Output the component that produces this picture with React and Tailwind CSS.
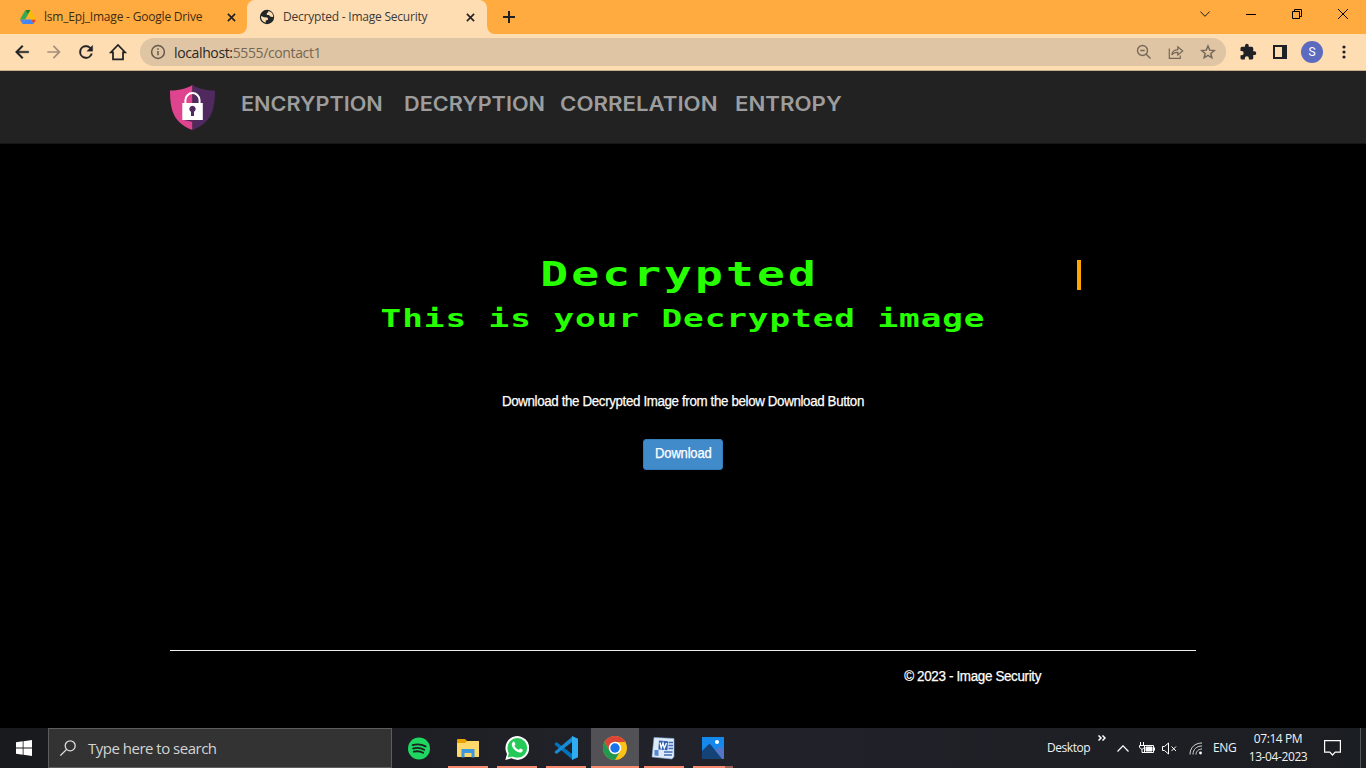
import React from 'react';

const uiFont = "font-['Open_Sans','Noto_Sans',sans-serif]";
const bodyFont = "font-['Liberation_Sans',Arial,sans-serif]";

function Close({ className }) {
  return (
    <svg viewBox="0 0 10 10" className={'h-[9px] w-[9px] ' + className} fill="none" stroke="#222" strokeWidth="1.8">
      <path d="M1 1l8 8M9 1L1 9" />
    </svg>
  );
}

function DriveLogo() {
  return (
    <svg viewBox="0 0 87.3 78" className="h-[14px] w-[16px]">
      <path fill="#4285f4" d="M6.6 66.85l3.85 6.65c.8 1.4 1.95 2.5 3.3 3.3L27.5 53H0c0 1.55.4 3.1 1.2 4.5z" />
      <path fill="#34a853" d="M43.65 25L29.9 1.2c-1.35.8-2.5 1.9-3.3 3.3L1.2 48.5A9 9 0 0 0 0 53h27.5z" />
      <path fill="#ea4335" d="M73.55 76.8c1.35-.8 2.5-1.9 3.3-3.3l1.6-2.75L86.1 57.5c.8-1.4 1.2-2.95 1.2-4.5H59.8l5.85 11.5z" />
      <path fill="#188038" d="M43.65 25L57.4 1.2C56.05.4 54.5 0 52.9 0H34.4c-1.6 0-3.15.45-4.5 1.2z" />
      <path fill="#4285f4" d="M59.8 53H27.5L13.75 76.8c1.35.8 2.9 1.2 4.5 1.2h50.8c1.6 0 3.15-.45 4.5-1.2z" />
      <path fill="#fbbc04" d="M73.4 26.5L60.7 4.5c-.8-1.4-1.95-2.5-3.3-3.3L43.65 25 59.8 53h27.45c0-1.55-.4-3.1-1.2-4.5z" />
    </svg>
  );
}

function Globe() {
  return (
    <svg viewBox="0 0 16 16" className="h-[16px] w-[16px]">
      <circle cx="8" cy="8" r="7.2" fill="#222528" />
      <path fill="#ffddb3" d="M9.1 1.9l.3 1.2-1.6 1.1v1.7l2.1.2 1.7 1.6 2.6.2A6 6 0 0 0 9.1 1.9zM2 7.1l3.2 1.1 3.1.3.9 1.4-1 1.3H6.8l-.2 2.5A6 6 0 0 1 2 7.1z" />
    </svg>
  );
}

function TabStrip() {
  return (
    <div className="flex h-[34px] w-full bg-[#ffab40]">
      <div className="flex w-[247px] items-center pl-5">
        <DriveLogo />
        <span className="ml-2 w-[183px] whitespace-nowrap text-[12px] tracking-[-0.2px] text-[#3d2b14]">lsm_Epj_Image - Google Drive</span>
        <Close className="shrink-0" />
      </div>
      <div className="relative flex w-[240px] items-center rounded-t-[8px] bg-[#ffddb3] pl-3">
        <svg viewBox="0 0 8 8" className="absolute -left-2 bottom-0 h-2 w-2" fill="#ffddb3"><path d="M8 0v8H0A8 8 0 0 0 8 0z" /></svg>
        <svg viewBox="0 0 8 8" className="absolute -right-2 bottom-0 h-2 w-2" fill="#ffddb3"><path d="M0 0v8h8A8 8 0 0 1 0 0z" /></svg>
        <Globe />
        <span className="ml-2 w-[183px] whitespace-nowrap text-[12px] tracking-[-0.22px] text-[#3b3a38]">Decrypted - Image Security</span>
        <Close className="shrink-0" />
      </div>
      <svg viewBox="0 0 12 12" className="ml-4 mt-[11px] h-3 w-3" stroke="#202124" strokeWidth="2"><path d="M6 0v12M0 6h12" /></svg>
      <div className="ml-auto flex h-7 items-center">
        <svg viewBox="0 0 10 6" className="mr-[36px] h-[6px] w-[10px]" fill="none" stroke="#1c1c1c"><path d="M.3.5L5 5.3 9.7.5" /></svg>
        <svg viewBox="0 0 10 10" className="mr-[36px] h-[10px] w-[10px]" stroke="#000"><path d="M0 5.5h10" /></svg>
        <svg viewBox="0 0 10 10" className="mr-[36px] h-[10px] w-[10px]" fill="none" stroke="#000"><path d="M.5 2.5h7v7h-7zM2.5 2.5v-2h7v7h-2" /></svg>
        <svg viewBox="0 0 10 10" className="mr-[18px] h-[10px] w-[10px]" fill="none" stroke="#000"><path d="M0 0l10 10M10 0L0 10" /></svg>
      </div>
    </div>
  );
}

function Toolbar() {
  return (
    <div className="flex h-[37px] w-full items-center border-b border-[#c9ae8d] bg-[#ffddb3]">
      <svg viewBox="0 0 24 24" className="ml-3 h-5 w-5" fill="#202124"><path d="M20 11H7.83l5.59-5.59L12 4l-8 8 8 8 1.41-1.41L7.83 13H20z" stroke="#202124" strokeWidth=".5" /></svg>
      <svg viewBox="0 0 24 24" className="ml-3 h-5 w-5" fill="#a38f79"><path d="M12 4l-1.41 1.41L16.17 11H4v2h12.17l-5.58 5.59L12 20l8-8z" /></svg>
      <svg viewBox="0 0 24 24" className="ml-3 h-5 w-5" fill="#202124"><path d="M17.65 6.35A7.96 7.96 0 0 0 12 4a8 8 0 1 0 7.73 10h-2.08A6 6 0 1 1 12 6c1.66 0 3.14.69 4.22 1.78L13 11h7V4z" stroke="#202124" strokeWidth=".4" /></svg>
      <svg viewBox="0 0 24 24" className="ml-3 h-5 w-5" fill="none" stroke="#202124" strokeWidth="2.1"><path d="M3.5 12.3L12 3.600l8.500 8.700H18V20.800H6v-8.500z" /></svg>
      <div className="ml-3 flex h-7 w-[1086px] items-center rounded-full bg-[#dfc5a3]">
        <svg viewBox="0 0 16 16" className="ml-[10px] h-4 w-4" fill="none" stroke="#65594b" strokeWidth="1.5"><circle cx="8" cy="8" r="6.4" /><path d="M8 7v4.2M8 4.2v1.5" /></svg>
        <span className="ml-2 whitespace-nowrap text-[14px] tracking-[-0.37px] text-[#756755]"><span className="text-[#292724]">localhost:</span>5555/contact1</span>
        <svg viewBox="0 0 16 16" className="ml-auto h-4 w-4" fill="none" stroke="#75685a" strokeWidth="1.4"><circle cx="6.500" cy="6.500" r="5" /><path d="M10.200 10.200l4.300 4.300M4.300 6.500h4.400" /></svg>
        <svg viewBox="0 0 16 16" className="ml-4 h-4 w-4" fill="none" stroke="#75685a" strokeWidth="1.2"><path d="M1.300 4.500v9.800h11v-2.800M3.800 11c.3-3.200 2.400-5.200 6-5.400V2.700L14.700 7l-4.900 4V8.300C7 8.200 5 9 3.800 11z" /></svg>
        <svg viewBox="0 0 24 24" className="ml-[15px] mr-[9px] h-[18px] w-[18px]" fill="none" stroke="#75685a" strokeWidth="2"><path d="M12 4l2.300 5.500 6 .5-4.500 3.900 1.300 5.800-5.100-3.100-5.100 3.100 1.300-5.800L3.700 10l6-.5z" /></svg>
      </div>
      <svg viewBox="0 0 24 24" className="ml-[13px] h-[18px] w-[18px]" fill="#202124"><path d="M20.5 11H19V7a2 2 0 0 0-2-2h-4V3.500a2.500 2.500 0 0 0-5 0V5H4a2 2 0 0 0-2 2v3.800h1.500a2.700 2.700 0 0 1 0 5.400H2V20a2 2 0 0 0 2 2h3.800v-1.500a2.700 2.700 0 0 1 5.400 0V22H17a2 2 0 0 0 2-2v-4h1.500a2.500 2.500 0 0 0 0-5z" /></svg>
      <svg viewBox="0 0 14 14" className="ml-[16px] h-[14px] w-[14px]"><path fill="none" stroke="#202124" strokeWidth="2" d="M1 1h12v12H1z" /><path fill="#202124" d="M9 0h5v14H9z" /></svg>
      <div className="ml-[14px] flex h-[22px] w-[22px] items-center justify-center rounded-full bg-[#5c6bc0] font-['Roboto',sans-serif] text-[12px] text-white">S</div>
      <svg viewBox="0 0 4 14" className="ml-[19px] h-[14px] w-1" fill="#202124"><circle cx="2" cy="2" r="1.6" /><circle cx="2" cy="7" r="1.6" /><circle cx="2" cy="12" r="1.6" /></svg>
    </div>
  );
}

function Shield() {
  return (
    <svg viewBox="0 0 45 45" className="h-[45px] w-[45px] shrink-0">
      <path fill="#df458f" d="M22.500 0C16 4 8 5.500 0 5.500 0 26 4 38 22.500 45z" />
      <path fill="#50295f" d="M22.500 0C29 4 37 5.500 45 5.500 45 26 41 38 22.500 45z" />
      <path fill="#50295f" d="M14 35h8.500v2z" />
      <path fill="none" stroke="#fff" strokeWidth="2" d="M15.400 19v-3.800a7.100 7.100 0 0 1 14.200 0V19" />
      <path fill="#fff" d="M12.300 18h20.500v17H12.300z" />
      <path fill="#50295f" d="M22.500 20.800a3.300 3.300 0 0 0-1.500 6.200V31h3v-4a3.300 3.300 0 0 0-1.500-6.200z" />
    </svg>
  );
}

function NavItem({ children, className, fit }) {
  return (
    <a className={'whitespace-nowrap ' + className}>
      <span className={'inline-block origin-left ' + fit}>{children}</span>
    </a>
  );
}

function Navbar() {
  return (
    <nav className="flex h-[73px] w-full border-b border-[#151515] bg-[#222] pl-[170px] pt-[14px]">
      <Shield />
      <div className="ml-[26px] flex pt-[5px] font-['Inter',sans-serif] text-[19.500px] font-semibold leading-7 text-[#9d9d9d]">
        <NavItem className="w-[163px]" fit="scale-x-[1.11]">ENCRYPTION</NavItem>
        <NavItem className="w-[156px]" fit="scale-x-[1.11]">DECRYPTION</NavItem>
        <NavItem className="w-[175px]" fit="scale-x-[1.14]">CORRELATION</NavItem>
        <NavItem className="w-[110px]" fit="scale-x-[1.14]">ENTROPY</NavItem>
      </div>
    </nav>
  );
}

function Content() {
  return (
    <main className={'flex h-[584px] w-full flex-col items-center bg-black text-white ' + bodyFont}>
      <div className="mt-[116px] flex h-[30px] w-[796px] items-center justify-center border-r-4 border-[#ffa500] font-['DejaVu_Sans_Mono',monospace] text-[33px] font-bold leading-[30px] text-[#26ff00]">
        <span className="-ml-[2px] inline-block origin-center scale-x-[1.4] whitespace-nowrap tracking-[2.27px]">Decrypted</span>
      </div>
      <h2 className="mt-[14px] flex h-[30px] items-center font-['DejaVu_Sans_Mono',monospace] text-[24.500px] font-bold leading-[30px] text-[#26ff00]">
        <span className="inline-block origin-center scale-x-[1.4] whitespace-nowrap tracking-[0.68px]">This is your Decrypted image</span>
      </h2>
      <p className="mt-[57px] h-5 origin-center scale-x-[0.953] whitespace-nowrap text-[14px] leading-5 tracking-[-0.38px] [-webkit-text-stroke:0.25px_#fff]">Download the Decrypted Image from the below Download Button</p>
      <button className="mt-[28px] flex h-[31px] w-[80px] items-center justify-center rounded-[3px] border border-[#357ebd] bg-[#428bca] pb-[2px] text-[14px] tracking-[-0.2px] [-webkit-text-stroke:0.25px_#fff]">
        <span className="inline-block scale-x-[0.93]">Download</span>
      </button>
      <footer className="mt-[180px] flex w-[1026px] justify-end border-t border-[#eee] pr-[155px] pt-[15px]">
        <p className="origin-right scale-x-[0.957] whitespace-nowrap text-[14px] leading-5 tracking-[-0.35px] [-webkit-text-stroke:0.25px_#fff]">© 2023 - Image Security</p>
      </footer>
    </main>
  );
}

function AppSlot({ children, active, className = '' }) {
  return (
    <div className={'flex h-10 items-center justify-center ' + (active ? 'w-12 bg-[#515156] ' : 'w-10 ') + 'border-b-2 border-[#f88a70] pt-[2px] ' + className}>{children}</div>
  );
}

function TaskApps() {
  return (
    <div className="flex h-10">
      <div className="flex w-[56px] items-center justify-center pr-[2px]">
        <svg viewBox="0 0 24 24" className="h-[23px] w-[22px]"><circle cx="12" cy="12" r="12" fill="#1ed760" /><path fill="none" stroke="#1f2024" strokeWidth="2" strokeLinecap="round" d="M5 8.300c5-1.500 10-.9 14.200 1.400M5.700 12c4-1.200 8.200-.8 12 1.300M6.300 15.500c3.500-.9 7-.5 10.200 1.200" /></svg>
      </div>
      <AppSlot>
        <svg viewBox="0 0 22 19" className="h-[19px] w-[22px]"><path fill="#e8a300" d="M0 1q0-1 1-1h7l2 2H22v5H0z" /><path fill="#ffd86b" d="M0 4h8l2-2h12v15.500q0 .5-1 .5H1q-1 0-1-1z" /><path fill="#3b98e0" d="M4.500 10h13v8.500h-3V14h-7v4.500h-3z" /></svg>
      </AppSlot>
      <AppSlot className="ml-[9px]">
        <svg viewBox="0 0 24 24" className="h-6 w-6"><path fill="#fff" d="M.3 24l1.700-6.100A11.900 11.900 0 1 1 6.400 22.300z" /><circle cx="12.300" cy="11.900" r="9.900" fill="#25c957" /><path fill="#25c957" d="M2.800 21.400l1.200-5 3.900 4z" /><path fill="#fff" d="M8 6c.6-.6 1.300-.5 1.600.2l.8 1.900c.2.600-.9 1.500-.9 1.800 1 1.900 2.300 3.100 4.300 3.800.4.100 1.200-1.300 1.600-1.200l2.100 1c.8.400-.1 2.300-.8 2.700-3.800 2.100-11-4.600-9.800-8.600.2-.7.600-1.200 1.100-1.600z" /></svg>
      </AppSlot>
      <AppSlot className="ml-[9px]">
        <svg viewBox="0 0 24 24" className="h-6 w-6"><path fill="#0073bd" d="M.5 7.700L2.500 6 19 18.700V24L1 9z" /><path fill="#198bd3" d="M.5 16.300l2 1.700L19 5.300V0L.8 15.500z" /><path fill="#2eacf4" d="M18 0l6 2.700v18.600L18 24z" /></svg>
      </AppSlot>
      <AppSlot active className="ml-[5px]">
        <svg viewBox="0 0 24 24" className="h-6 w-6"><circle cx="12" cy="12" r="12" fill="#fbc116" /><path fill="#dd4436" d="M1.600 6A12 12 0 0 1 22.400 6H12l-5.200 9z" /><path fill="#219750" d="M1.600 6L6.800 15 12 18l5.200-3L12 24A12 12 0 0 1 1.600 6z" /><circle cx="12" cy="12" r="6.200" fill="#fff" /><circle cx="12" cy="12" r="4.700" fill="#1a73e8" /></svg>
      </AppSlot>
      <AppSlot className="ml-[5px] pr-[2px]">
        <svg viewBox="0 0 24 23" className="h-[23px] w-6"><path fill="#dceafa" stroke="#8aabdc" strokeWidth=".6" d="M3 .500L23 1.500v18L21 22 1 20z" /><path stroke="#416cb8" strokeWidth="1.300" d="M17.500 5.500h4.500M17.500 8.500h4.500M17.500 11.500h4.500M13 15h8.500M13 18h8" /><path fill="#5b86cc" d="M3.500 13h4v6l-4-.5z" /><path fill="#2f5fae" d="M8 3.500l9 .8-.6 9-9-.8z" /><path fill="none" stroke="#fff" strokeWidth="1.300" d="M9 5.500l1.200 5.500 1.800-5 1.300 5.200L15.500 6" /></svg>
      </AppSlot>
      <AppSlot className="relative ml-[9px]">
        <svg viewBox="0 0 22 22" className="h-[22px] w-[22px]"><path fill="#1588ec" d="M0 0h22v22H0z" /><path fill="#5375c8" d="M11 15l6-5q1-.8 2 0l3 3v9H12z" /><path fill="#154277" d="M0 14l6.500-6.500q1-1 2 0L20 22H0z" /><circle cx="15" cy="5" r="2" fill="#fff" /></svg>
        <span className="absolute -bottom-[2px] left-[32px] h-[2px] w-2 bg-[#9c6156]" />
      </AppSlot>
    </div>
  );
}

function Tray() {
  return (
    <div className="ml-auto flex h-10 items-center text-[12px] text-[#f1f1f1]">
      <span className="w-[51px] whitespace-nowrap tracking-[-0.45px]">Desktop</span>
      <svg viewBox="0 0 8 6" className="mb-[20px] h-[6px] w-2" fill="none" stroke="#fff" strokeWidth="1.500"><path d="M.5.500L3 3 .500 5.500M4.500.500L7 3 4.500 5.500" /></svg>
      <svg viewBox="0 0 12 7" className="ml-[11px] h-[7px] w-3" fill="none" stroke="#fff" strokeWidth="1.200"><path d="M.5 6.500L6 .8l5.500 5.700" /></svg>
      <svg viewBox="0 0 16 12" className="ml-[10px] h-3 w-4" fill="none" stroke="#fff"><path d="M5.500 3.500h9v7h-9zM15.500 5.500v3M1.500 0v3M4.500 0v3M.500 3.500h5v2l-2 1.500h-1L.500 5.500zM3 7v3.500h3" /><path fill="#fff" d="M7 5h6v4H7z" /></svg>
      <svg viewBox="0 0 15 13" className="ml-[7px] h-[13px] w-[15px]" fill="none" stroke="#fff"><path d="M.500 4.500h2L6.500 1v11l-4-3.500h-2zM9.500 4.500l4.500 4.500M14 4.500L9.500 9" /></svg>
      <svg viewBox="0 0 14 14" className="ml-[12px] h-[14px] w-[14px]" fill="none" stroke="#d8d8d8"><path d="M1 13.500C1 6.500 6 2 13 2M4 13.500C4 8.500 7.500 5 13 5M7 13.500C7 10.500 9.500 8 13 8" /><circle cx="11.500" cy="12" r="1.400" fill="#fff" stroke="none" /></svg>
      <span className="ml-[10px] w-[24px] tracking-[-0.4px]">ENG</span>
      <div className="ml-3 flex w-[58px] flex-col items-center whitespace-nowrap leading-[18px] tracking-[-0.4px]">
        <span>07:14 PM</span>
        <span>13-04-2023</span>
      </div>
      <svg viewBox="0 0 17 16" className="ml-[17px] h-4 w-[17px]" fill="none" stroke="#fff" strokeWidth="1.200"><path d="M.6.6h15.800v11.500h-5.200L8.500 15l-2.700-2.900H.6z" /></svg>
      <span className="ml-[19px] mr-[5px] h-10 w-px bg-[#55565a]" />
    </div>
  );
}

function Taskbar() {
  return (
    <div className="flex h-10 w-full bg-gradient-to-r from-[#191a1d] via-[#22222a] to-[#1b1e22]">
      <div className="flex w-12 items-center justify-center">
        <svg viewBox="0 0 16 16" className="h-4 w-4" fill="#fff"><path d="M0 2.200L6.700 1.300v6.300H0zM7.500 1.200L16 0v7.600H7.500zM0 8.400h6.700v6.300L0 13.800zM7.500 8.400H16V16l-8.500-1.200z" /></svg>
      </div>
      <div className="flex w-[344px] items-center border border-[#5d5d5d] bg-[#333]">
        <svg viewBox="0 0 16 16" className="ml-[11px] h-4 w-4" fill="none" stroke="#ddd" strokeWidth="1.300"><circle cx="10.200" cy="5.800" r="5" /><path d="M6.600 9.400L.400 15.600" /></svg>
        <span className="ml-3 whitespace-nowrap text-[15px] tracking-[-0.5px] text-[#d4d4d4]">Type here to search</span>
      </div>
      <TaskApps />
      <Tray />
    </div>
  );
}

export default function App() {
  return (
    <div className={'flex h-[768px] w-[1366px] flex-col overflow-hidden bg-black ' + uiFont}>
      <TabStrip />
      <Toolbar />
      <Navbar />
      <Content />
      <Taskbar />
    </div>
  );
}
